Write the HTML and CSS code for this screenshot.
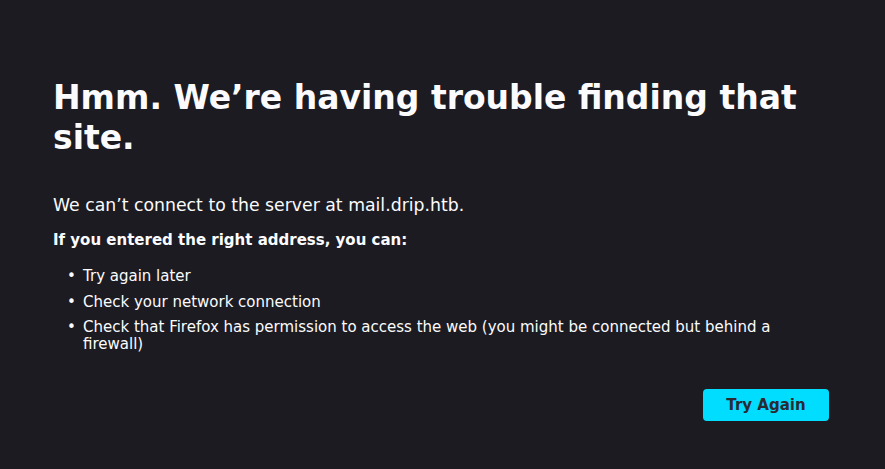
FILE: index.html
```html
<!DOCTYPE html>
<html lang="en">
<head>
    <meta charset="UTF-8">
    <title>Problem loading page</title>
    <link rel="stylesheet" href="styles.css">
</head>
<body>
    <div class="container">
        <h1 class="title">Hmm. We’re having trouble finding that site.</h1>
        <p class="short-desc">We can’t connect to the server at mail.drip.htb.</p>
        <p class="long-title">If you entered the right address, you can:</p>
        <ul class="tips">
            <li>Try again later</li>
            <li>Check your network connection</li>
            <li>Check that Firefox has permission to access the web (you might be connected but behind a firewall)</li>
        </ul>
        <div class="actions">
            <button class="try-again">Try Again</button>
        </div>
    </div>
</body>
</html>
```

FILE: styles.css
```css
body {
    margin: 0;
    background-color: #1c1b22;
    color: #fbfbfe;
    font-family: "DejaVu Sans", sans-serif;
    font-size: 15px;
}
.container {
    width: 776px;
    margin-left: 53px;
    padding-top: 78px;
}
.title {
    font-size: 33px;
    line-height: 40px;
    font-weight: bold;
    margin: 0 0 37px;
}
.short-desc {
    font-size: 17.3px;
    margin: 0 0 16px;
}
.long-title {
    font-weight: bold;
    margin: 0 0 19px;
}
.tips {
    margin: 0;
    padding-left: 30px;
    list-style: none;
}
.tips li {
    margin-bottom: 8.5px;
    line-height: 17px;
}
.tips li::before {
    content: "•";
    display: inline-block;
    width: 16px;
    margin-left: -16px;
}
.actions {
    display: flex;
    justify-content: flex-end;
    margin-top: 36px;
}
.try-again {
    background-color: #00ddff;
    color: #2b2a33;
    border: none;
    border-radius: 4px;
    font-family: "DejaVu Sans", sans-serif;
    font-size: 15px;
    font-weight: bold;
    width: 126px;
    height: 32px;
}
```
